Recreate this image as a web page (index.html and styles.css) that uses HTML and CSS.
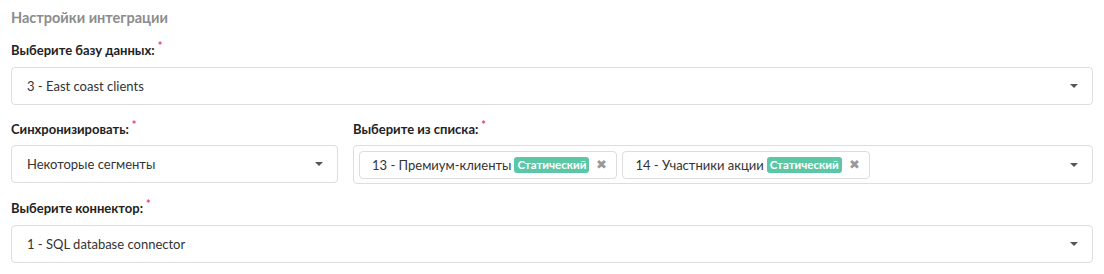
FILE: index.html
```html
<!DOCTYPE html>
<html lang="ru">
<head>
  <meta charset="UTF-8">
  <title>Настройки интеграции</title>
  <link rel="stylesheet" href="styles.css">
</head>
<body>
  <div class="panel">
    <h3 class="title">Настройки интеграции</h3>

    <div class="field">
      <label>Выберите базу данных:<span class="req">*</span></label>
      <div class="select">
        <span class="value">3 - East coast clients</span>
        <span class="caret"></span>
      </div>
    </div>

    <div class="row">
      <div class="field sync">
        <label>Синхронизировать:<span class="req">*</span></label>
        <div class="select">
          <span class="value">Некоторые сегменты</span>
          <span class="caret"></span>
        </div>
      </div>
      <div class="field list">
        <label>Выберите из списка:<span class="req">*</span></label>
        <div class="select multi">
          <div class="tags">
            <span class="tag">13 - Премиум-клиенты <span class="badge">Статический</span><span class="remove">&#10006;</span></span>
            <span class="tag">14 - Участники акции <span class="badge">Статический</span><span class="remove">&#10006;</span></span>
          </div>
          <span class="caret"></span>
        </div>
      </div>
    </div>

    <div class="field">
      <label>Выберите коннектор:<span class="req">*</span></label>
      <div class="select">
        <span class="value">1 - SQL database connector</span>
        <span class="caret"></span>
      </div>
    </div>
  </div>
</body>
</html>
```

FILE: styles.css
```css
body { margin: 0; padding: 0; background: #fff; font-family: Lato, "Open Sans", sans-serif; color: #333; }
.panel { padding: 9px 11px 0 11px; }
.title { margin: 0 0 15px 0; font-size: 14.5px; font-weight: bold; color: #8c8c8c; line-height: 18px; }
.field { margin-bottom: 16px; }
.row label { margin-bottom: 8px; }
label { display: block; font-size: 13px; font-weight: bold; color: #222; line-height: 16px; margin-bottom: 9px; }
.req { color: #e0476b; font-size: 11px; vertical-align: top; margin-left: 3px; position: relative; top: -4px; }
.select { display: flex; align-items: center; height: 38px; border: 1px solid #ddd; border-radius: 4px; padding: 0 14px 0 15px; box-sizing: border-box; font-size: 13px; color: #333; }
.value { flex: 1; }
.caret { width: 0; height: 0; border-left: 4px solid transparent; border-right: 4px solid transparent; border-top: 4px solid #555; }
.row { display: flex; gap: 15px; }
.sync { width: 327px; flex: none; }
.list { flex: 1; }
.multi { height: 39px; padding-left: 5px; }
.tags { flex: 1; display: flex; gap: 5px; }
.tag { display: flex; align-items: center; height: 28px; border: 1px solid #ddd; border-radius: 4px; padding: 0 9px 0 12px; box-sizing: border-box; }
.badge { background: #5cc7a6; color: #fff; font-weight: bold; font-size: 11.5px; line-height: 16px; padding: 0 3px; border-radius: 3px; margin-left: 3px; }
.remove { color: #999; font-size: 12.5px; margin-left: 7px; }
```
